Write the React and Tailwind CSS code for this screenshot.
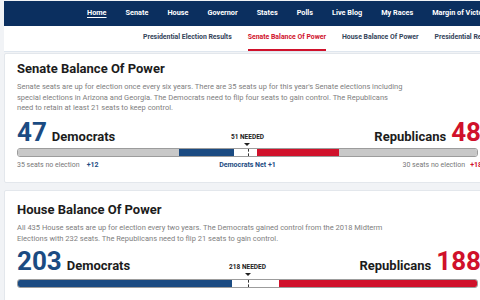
const navItems = ['Home', 'Senate', 'House', 'Governor', 'States', 'Polls', 'Live Blog', 'My Races', 'Margin of Victory'];

const subNavItems = [
  { label: 'Presidential Election Results', active: false },
  { label: 'Senate Balance Of Power', active: true },
  { label: 'House Balance Of Power', active: false },
  { label: 'Presidential Results By State', active: false },
];

const races = [
  {
    title: 'Senate Balance Of Power',
    text: "Senate seats are up for election once every six years. There are 35 seats up for this year's Senate elections including special elections in Arizona and Georgia. The Democrats need to flip four seats to gain control. The Republicans need to retain at least 21 seats to keep control.",
    dem: 47,
    rep: 48,
    needed: '51 NEEDED',
    total: 100,
    segments: [
      { seats: 35, color: 'bg-[#c8c8c8]' },
      { seats: 12, color: 'bg-[#1b4b82]' },
      { seats: 5, color: 'bg-white' },
      { seats: 18, color: 'bg-[#d0112b]' },
      { seats: 30, color: 'bg-[#c8c8c8]' },
    ],
    footer: true,
  },
  {
    title: 'House Balance Of Power',
    text: 'All 435 House seats are up for election every two years. The Democrats gained control from the 2018 Midterm Elections with 232 seats. The Republicans need to flip 21 seats to gain control.',
    dem: 203,
    rep: 188,
    needed: '218 NEEDED',
    total: 435,
    segments: [
      { seats: 203, color: 'bg-[#1b4b82]' },
      { seats: 44, color: 'bg-white' },
      { seats: 188, color: 'bg-[#d0112b]' },
    ],
    footer: false,
  },
];

const PowerCard = ({ race, first }) => {
  return (
    <div className={`bg-white border border-[#e3e7ec] rounded-[2px] pl-[12px] pr-[12px] ${first ? 'pt-[7px] pb-[13px]' : 'pt-[11px] pb-[20px]'}`}>
      <div className="w-[461px]">
        <h2 className="text-[13px] leading-[16px] font-bold text-[#1c1c1c]">{race.title}</h2>
        <p className="mt-[5px] max-w-[388px] text-[7.5px] leading-[10.5px] text-[#808080]">
          {race.text}
        </p>

        <div className={`${first ? 'mt-[5px]' : 'mt-[4px]'} grid grid-cols-[1fr_auto_1fr] items-end`}>
          <div className="flex items-baseline gap-[5px]">
            <span className="text-[26px] leading-[26px] font-bold text-[#1b4b82]">{race.dem}</span>
            <span className="text-[13px] font-bold text-[#1c1c1c]">Democrats</span>
          </div>
          <div className="flex flex-col items-center">
            <span className="text-[6.5px] leading-[8px] font-bold text-[#222]">{race.needed}</span>
            <span className="mt-[2px] w-0 h-0 border-l-[3px] border-r-[3px] border-t-[3px] border-l-transparent border-r-transparent border-t-[#222]" />
          </div>
          <div className="flex items-baseline justify-end gap-[5px] -mr-[3px]">
            <span className="text-[13px] font-bold text-[#1c1c1c]">Republicans</span>
            <span className="text-[26px] leading-[26px] font-bold text-[#d0112b]">{race.rep}</span>
          </div>
        </div>

        <div className={`relative ${first ? 'mt-[2px]' : 'mt-[3px]'} h-[9px] flex rounded-[3px] overflow-hidden border border-[#9c9c9c]`}>
          {race.segments.map((s, i) => (
            <div key={i} className={s.color} style={{ width: `${(s.seats / race.total) * 100}%` }} />
          ))}
          <div className="absolute left-1/2 top-0 bottom-0 border-l border-dashed border-[#333]" />
        </div>

        {race.footer && (
          <div className="mt-[4px] grid grid-cols-[1fr_auto_1fr] items-center text-[7px] leading-[8px]">
            <div className="flex gap-[7px]">
              <span className="text-[#777]">35 seats no election</span>
              <span className="font-bold text-[#1b4b82]">+12</span>
            </div>
            <span className="font-bold text-[#1b4b82]">Democrats Net +1</span>
            <div className="flex justify-end gap-[5px] -mr-[4px]">
              <span className="text-[#777]">30 seats no election</span>
              <span className="font-bold text-[#d0112b]">+18</span>
            </div>
          </div>
        )}
      </div>
    </div>
  );
};

const App = () => {
  return (
    <div className="w-[480px] h-[300px] overflow-hidden bg-[#f1f3f6] font-['Roboto',sans-serif]">
      <div className="w-[520px] pl-[4px] pt-[1px]">
        <nav className="h-[25px] bg-[#0b2f5f] flex items-center pl-[83px] gap-[19px] whitespace-nowrap">
          {navItems.map((item) => (
            <span
              key={item}
              className={`text-[7.3px] font-bold text-white ${item === 'Home' ? 'underline underline-offset-[2px]' : ''}`}
            >
              {item}
            </span>
          ))}
        </nav>

        <div className="h-[26px] bg-white border-b border-[#dfe6ee] flex pl-[139px] gap-[16px] whitespace-nowrap">
          {subNavItems.map((item) => (
            <span
              key={item.label}
              className={`flex items-center border-b-2 text-[6.9px] font-bold ${
                item.active ? 'border-[#d0112b] text-[#d0112b]' : 'border-transparent text-[#33445a]'
              }`}
            >
              {item.label}
            </span>
          ))}
        </div>

        <div className="mt-[1px] flex flex-col gap-[7px]">
          {races.map((race, i) => (
            <PowerCard key={race.title} race={race} first={i === 0} />
          ))}
        </div>
      </div>
    </div>
  );
};

export default App;
